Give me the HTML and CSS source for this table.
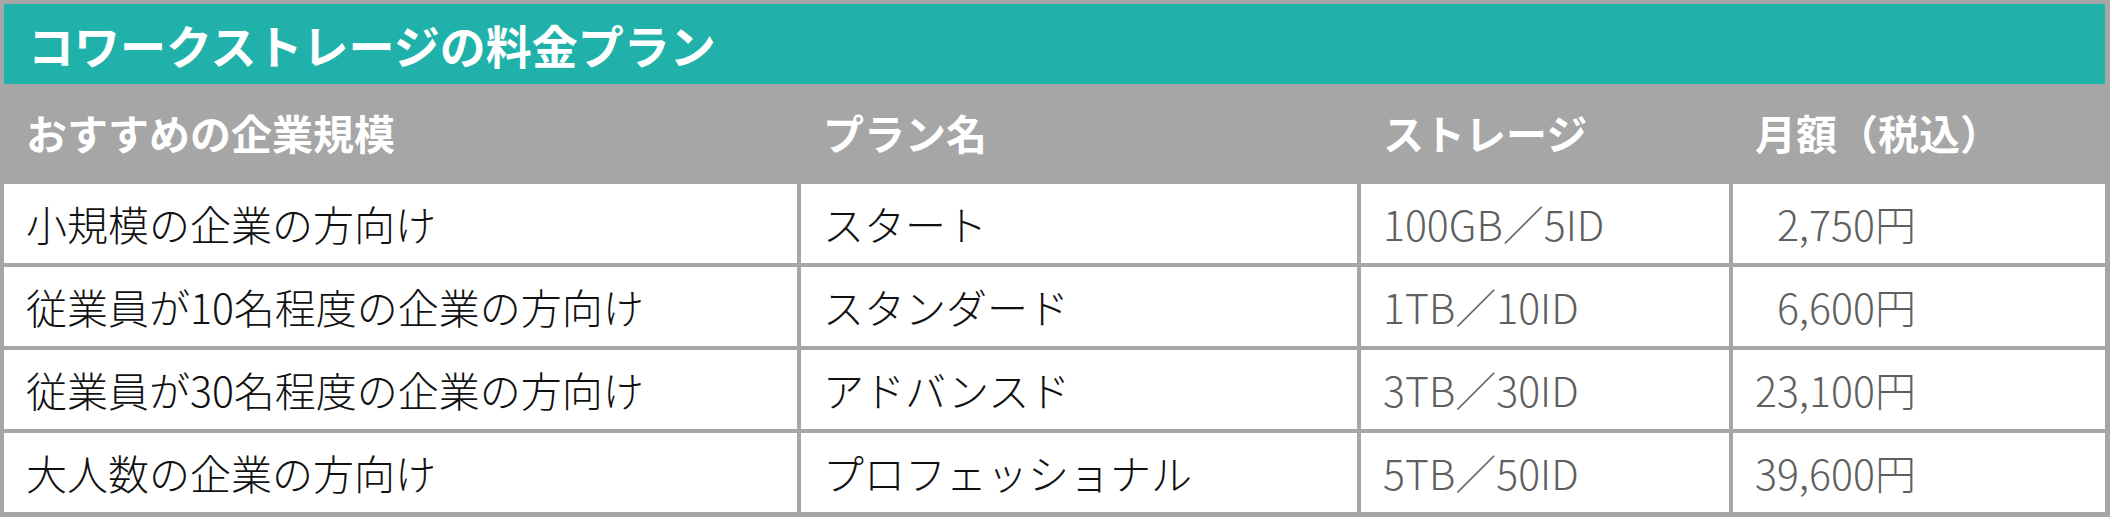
FILE: index.html
```html
<!DOCTYPE html>
<html lang="ja">
<head>
<meta charset="utf-8">
<title>コワークストレージの料金プラン</title>
<link rel="stylesheet" href="styles.css">
</head>
<body>
<div class="plan-table">
  <div class="plan-title">コワークストレージの料金プラン</div>
  <div class="plan-grid">
    <div class="cell head">おすすめの企業規模</div>
    <div class="cell head">プラン名</div>
    <div class="cell head">ストレージ</div>
    <div class="cell head">月額（税込）</div>

    <div class="cell">小規模の企業の方向け</div>
    <div class="cell">スタート</div>
    <div class="cell muted">100GB／5ID</div>
    <div class="cell muted price indent">2,750円</div>

    <div class="cell">従業員が10名程度の企業の方向け</div>
    <div class="cell">スタンダード</div>
    <div class="cell muted">1TB／10ID</div>
    <div class="cell muted price indent">6,600円</div>

    <div class="cell">従業員が30名程度の企業の方向け</div>
    <div class="cell">アドバンスド</div>
    <div class="cell muted">3TB／30ID</div>
    <div class="cell muted price">23,100円</div>

    <div class="cell">大人数の企業の方向け</div>
    <div class="cell">プロフェッショナル</div>
    <div class="cell muted">5TB／50ID</div>
    <div class="cell muted price">39,600円</div>
  </div>
</div>
</body>
</html>
```
FILE: styles.css
```css
html, body {
  margin: 0;
  padding: 0;
  background: #ffffff;
}

body {
  font-family: "Noto Sans CJK JP", "Noto Sans", sans-serif;
}

.plan-table {
  width: 2110px;
  box-sizing: border-box;
  background: #a6a6a6;
  padding: 4px 5px 5px 4px;
  display: flex;
  flex-direction: column;
}

.plan-title {
  height: 80px;
  box-sizing: border-box;
  background: #20b2aa;
  color: #ffffff;
  font-size: 46px;
  font-weight: 700;
  display: flex;
  align-items: center;
  padding-left: 24px;
  line-height: 1;
}

.plan-grid {
  display: grid;
  grid-template-columns: 793px 556px 368px 372px;
  grid-template-rows: 96px 79px 79px 79px 79px;
  gap: 4px;
}

.cell {
  background: #ffffff;
  color: #111111;
  font-size: 41px;
  font-weight: 300;
  line-height: 1;
  display: flex;
  align-items: center;
  padding-left: 22px;
  white-space: nowrap;
}

.cell.head {
  background: #a6a6a6;
  color: #ffffff;
  font-weight: 700;
}

.cell.muted {
  color: #5f5f5f;
}

.cell.price {
  font-variant-numeric: tabular-nums;
}

.cell.indent {
  padding-left: calc(22px + 1ch);
}
```
